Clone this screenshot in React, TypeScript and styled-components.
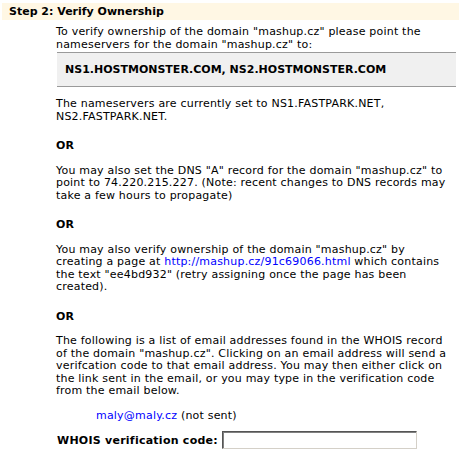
import styled, { createGlobalStyle } from 'styled-components';

const GlobalStyle = createGlobalStyle`
  body {
    margin: 0;
    background: #ffffff;
    font-family: 'DejaVu Sans', Verdana, sans-serif;
    font-size: 11px;
    color: #000000;
  }
`;

const Page = styled.div`
  padding-top: 3px;
  width: 459px;
  overflow: hidden;
`;

const StepHeader = styled.div`
  margin-left: 2px;
  height: 17px;
  line-height: 17px;
  padding-left: 7px;
  background-color: #fff7e4;
  font-weight: bold;
`;

const Content = styled.div`
  padding-left: 56px;
  padding-top: 6px;
  width: 400px;
  letter-spacing: 0.2px;
`;

const Paragraph = styled.p`
  margin: 0;
  line-height: 12.5px;
  white-space: nowrap;
`;

const Separator = styled.p`
  margin: 17px 0 12px;
  line-height: 12.5px;
  font-weight: bold;
`;

const ServerBox = styled.div`
  margin: 1px 0 11px 1px;
  padding: 10px 8px;
  line-height: 13px;
  letter-spacing: 0;
  background-color: #f0f0f0;
  border-top: 1px solid #9a9a9a;
  border-bottom: 1px solid #9a9a9a;
  font-weight: bold;
`;

const Link = styled.a`
  color: #0000ff;
  text-decoration: none;
`;

const EmailRow = styled.div`
  margin-top: 12px;
  padding-left: 40px;
  line-height: 12.5px;
`;

const CodeRow = styled.label`
  display: flex;
  align-items: center;
  gap: 4px;
  margin-top: 9px;
  padding-left: 1px;
  letter-spacing: 0.25px;
  font-weight: bold;
`;

const CodeInput = styled.input`
  box-sizing: border-box;
  width: 195px;
  height: 18px;
  margin: 0;
  padding: 1px 3px;
  border: 1px solid;
  border-color: #555555 #d4d0c8 #d4d0c8 #555555;
  box-shadow: inset 1px 1px 0 #808080;
  font-family: inherit;
  font-size: 11px;
  background: #ffffff;
  outline: none;
`;

export default function App() {
  return (
    <Page>
      <GlobalStyle />
      <StepHeader>Step 2: Verify Ownership</StepHeader>
      <Content>
        <Paragraph>
          To verify ownership of the domain "mashup.cz" please point the
          <br />
          nameservers for the domain "mashup.cz" to:
        </Paragraph>
        <ServerBox>NS1.HOSTMONSTER.COM, NS2.HOSTMONSTER.COM</ServerBox>
        <Paragraph>
          The nameservers are currently set to NS1.FASTPARK.NET,
          <br />
          NS2.FASTPARK.NET.
        </Paragraph>
        <Separator>OR</Separator>
        <Paragraph>
          You may also set the DNS "A" record for the domain "mashup.cz" to
          <br />
          point to 74.220.215.227. (Note: recent changes to DNS records may
          <br />
          take a few hours to propagate)
        </Paragraph>
        <Separator>OR</Separator>
        <Paragraph>
          You may also verify ownership of the domain "mashup.cz" by
          <br />
          creating a page at{' '}
          <Link href="#">http://mashup.cz/91c69066.html</Link> which contains
          <br />
          the text "ee4bd932" (retry assigning once the page has been
          <br />
          created).
        </Paragraph>
        <Separator>OR</Separator>
        <Paragraph>
          The following is a list of email addresses found in the WHOIS record
          <br />
          of the domain "mashup.cz". Clicking on an email address will send a
          <br />
          verifcation code to that email address. You may then either click on
          <br />
          the link sent in the email, or you may type in the verification code
          <br />
          from the email below.
        </Paragraph>
        <EmailRow>
          <Link href="#">maly@maly.cz</Link> (not sent)
        </EmailRow>
        <CodeRow>
          WHOIS verification code: <CodeInput type="text" />
        </CodeRow>
      </Content>
    </Page>
  );
}
